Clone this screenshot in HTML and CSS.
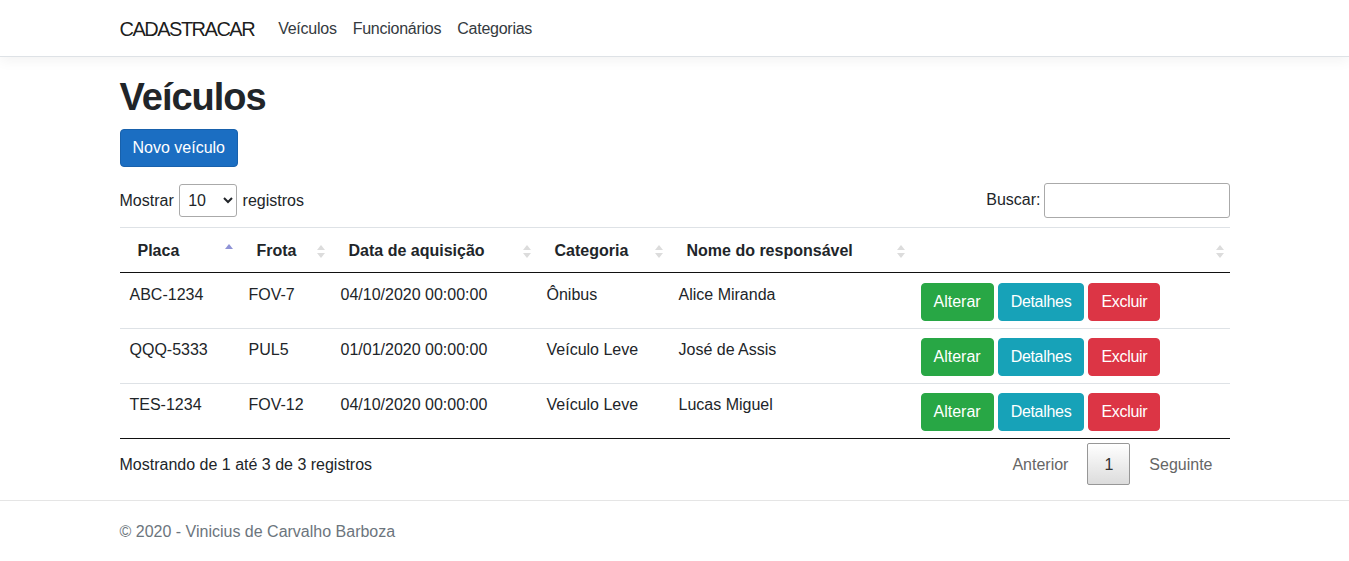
FILE: index.html
```html
<!DOCTYPE html>
<html lang="pt-br">
<head>
<meta charset="utf-8">
<title>Veículos - CADASTRACAR</title>
<link rel="stylesheet" href="styles.css">
</head>
<body>
<header class="navbar">
  <div class="container nav-inner">
    <a class="brand" href="#">CADASTRACAR</a>
    <nav class="nav-links">
      <a class="nav-link" href="#">Veículos</a>
      <a class="nav-link" href="#">Funcionários</a>
      <a class="nav-link" href="#">Categorias</a>
    </nav>
  </div>
</header>
<main class="container main">
  <h1 class="title">Veículos</h1>
  <p class="actions"><a class="btn btn-primary" href="#">Novo veículo</a></p>
  <div class="dt-wrapper">
    <div class="dt-top">
      <label class="dt-length">Mostrar <select class="dt-select"><option>10</option><option>25</option><option>50</option><option>100</option></select> registros</label>
      <label class="dt-filter">Buscar:<input class="dt-input" type="search"></label>
    </div>
    <table class="dt-table">
      <colgroup>
        <col class="c1"><col class="c2"><col class="c3"><col class="c4"><col class="c5"><col class="c6">
      </colgroup>
      <thead>
        <tr>
          <th class="sort sort-asc">Placa</th>
          <th class="sort">Frota</th>
          <th class="sort">Data de aquisição</th>
          <th class="sort">Categoria</th>
          <th class="sort">Nome do responsável</th>
          <th class="sort"></th>
        </tr>
      </thead>
      <tbody>
        <tr>
          <td>ABC-1234</td><td>FOV-7</td><td>04/10/2020 00:00:00</td><td>Ônibus</td><td>Alice Miranda</td>
          <td><div class="btns"><a class="btn btn-success" href="#">Alterar</a><a class="btn btn-info" href="#">Detalhes</a><a class="btn btn-danger" href="#">Excluir</a></div></td>
        </tr>
        <tr>
          <td>QQQ-5333</td><td>PUL5</td><td>01/01/2020 00:00:00</td><td>Veículo Leve</td><td>José de Assis</td>
          <td><div class="btns"><a class="btn btn-success" href="#">Alterar</a><a class="btn btn-info" href="#">Detalhes</a><a class="btn btn-danger" href="#">Excluir</a></div></td>
        </tr>
        <tr>
          <td>TES-1234</td><td>FOV-12</td><td>04/10/2020 00:00:00</td><td>Veículo Leve</td><td>Lucas Miguel</td>
          <td><div class="btns"><a class="btn btn-success" href="#">Alterar</a><a class="btn btn-info" href="#">Detalhes</a><a class="btn btn-danger" href="#">Excluir</a></div></td>
        </tr>
      </tbody>
    </table>
    <div class="dt-bottom">
      <div class="dt-info">Mostrando de 1 até 3 de 3 registros</div>
      <div class="dt-paginate">
        <a class="page-btn disabled">Anterior</a>
        <a class="page-btn current">1</a>
        <a class="page-btn disabled">Seguinte</a>
      </div>
    </div>
  </div>
</main>
<footer class="footer">
  <div class="container">© 2020 - Vinicius de Carvalho Barboza</div>
</footer>
</body>
</html>
```

FILE: styles.css
```css
* { box-sizing: border-box; }
html, body { height: 100%; }
body {
  margin: 0;
  font-family: "Liberation Sans", Arial, sans-serif;
  font-size: 16px;
  line-height: 1.5;
  color: #212529;
  background: #fff;
  display: flex;
  flex-direction: column;
  min-height: 100vh;
}
a { text-decoration: none; }
.container {
  width: 1140px;
  margin: 0 auto;
  padding: 0 15px;
}
.navbar {
  background: #fff;
  border-bottom: 1px solid #dee2e6;
  box-shadow: 0 4px 12px rgba(0,0,0,.05);
  padding: 8px 0;
  margin-bottom: 16px;
}
.nav-inner {
  display: flex;
  align-items: center;
}
.brand {
  font-size: 20px;
  line-height: 30px;
  padding: 6px 0 4px;
  margin-right: 16px;
  color: rgba(0,0,0,.9);
  letter-spacing: -1.5px;
}
.nav-links { display: flex; }
.nav-link {
  padding: 9px 8px 7px;
  color: #343a40;
  letter-spacing: -0.25px;
}
.main { flex: 0 0 auto; }
.title {
  font-size: 38px;
  line-height: 48px;
  font-weight: 700;
  letter-spacing: -1px;
  margin: 0 0 8px;
}
.actions { margin: 0 0 16px; }
.btn {
  display: inline-block;
  padding: 6px 12px;
  font-size: 16px;
  line-height: 24px;
  border: 1px solid transparent;
  border-radius: 4px;
  color: #fff;
  text-align: center;
}
.btn-primary { background: #1b6ec2; border-color: #1861ac; }
.btn-success { background: #28a745; border-color: #28a745; }
.btn-info { background: #17a2b8; border-color: #17a2b8; }
.btn-danger { background: #dc3545; border-color: #dc3545; }
.btns { display: flex; }
.btns .btn-info, .btns .btn-danger { letter-spacing: -0.3px; }
.btns .btn + .btn { margin-left: 4px; }
.btns .btn-danger { margin-left: 6px; }

.dt-wrapper { color: #333; }
.dt-top {
  display: flex;
  justify-content: space-between;
  align-items: center;
  height: 35px;
}
.dt-length { color: #212529; }
.dt-select {
  width: 58px;
  height: 33px;
  border: 1px solid #aaa;
  border-radius: 3px;
  padding: 4px;
  font-family: inherit;
  font-size: 16px;
  background: transparent;
  color: #212529;
  margin: 0 1px;
}
.dt-filter { color: #212529; }
.dt-input {
  width: 186px;
  height: 35px;
  margin-left: 3px;
  border: 1px solid #aaa;
  border-radius: 3px;
  padding: 5px;
  font-family: inherit;
  font-size: 16px;
  vertical-align: middle;
}
.dt-table {
  width: 1110px;
  border-collapse: collapse;
  margin-top: 9px;
  table-layout: fixed;
  color: #212529;
}
.c1 { width: 119px; }
.c2 { width: 92px; }
.c3 { width: 206px; }
.c4 { width: 132px; }
.c5 { width: 242px; }
.c6 { width: 319px; }
.dt-table th {
  text-align: left;
  font-weight: 700;
  padding: 11px 18px 9px;
  border-top: 1px solid #dee2e6;
  border-bottom: 1px solid #111;
  line-height: 24px;
  height: 45px;
}
.sort { position: relative; }
.sort::before, .sort::after {
  content: "";
  position: absolute;
  right: 6px;
  width: 0;
  height: 0;
  border-left: 4px solid transparent;
  border-right: 4px solid transparent;
}
.sort::before {
  top: 17px;
  border-bottom: 5px solid #dcdcdc;
}
.sort::after {
  top: 25px;
  border-top: 5px solid #dcdcdc;
}
.sort-asc::before { border-bottom-color: #8f93d6; top: 16px; }
.sort-asc::after { display: none; }
.dt-table td {
  padding: 9px 10px 7px;
  vertical-align: top;
  border-top: 1px solid #dee2e6;
  line-height: 24px;
}
.dt-table tbody tr:first-child td { border-top: none; padding-top: 10px; }
.dt-table tbody tr:last-child td { border-bottom: 1px solid #111; }

.dt-bottom {
  display: flex;
  justify-content: space-between;
  align-items: flex-start;
}
.dt-info {
  padding-top: 14px;
  color: #212529;
}
.dt-paginate {
  padding-top: 4px;
  display: flex;
}
.page-btn {
  display: inline-block;
  min-width: 24px;
  padding: 9px 16px 7px;
  margin-left: 2px;
  border: 1px solid transparent;
  border-radius: 2px;
  line-height: 24px;
  text-align: center;
  color: #666;
}
.page-btn.current {
  color: #333;
  border-color: #979797;
  background: linear-gradient(to bottom, #fff 0%, #dcdcdc 100%);
}
.footer {
  margin-top: auto;
  border-top: 1px solid #e5e5e5;
  line-height: 59px;
  color: #6c757d;
  white-space: nowrap;
}
.footer .container { padding-top: 1px; }
```
